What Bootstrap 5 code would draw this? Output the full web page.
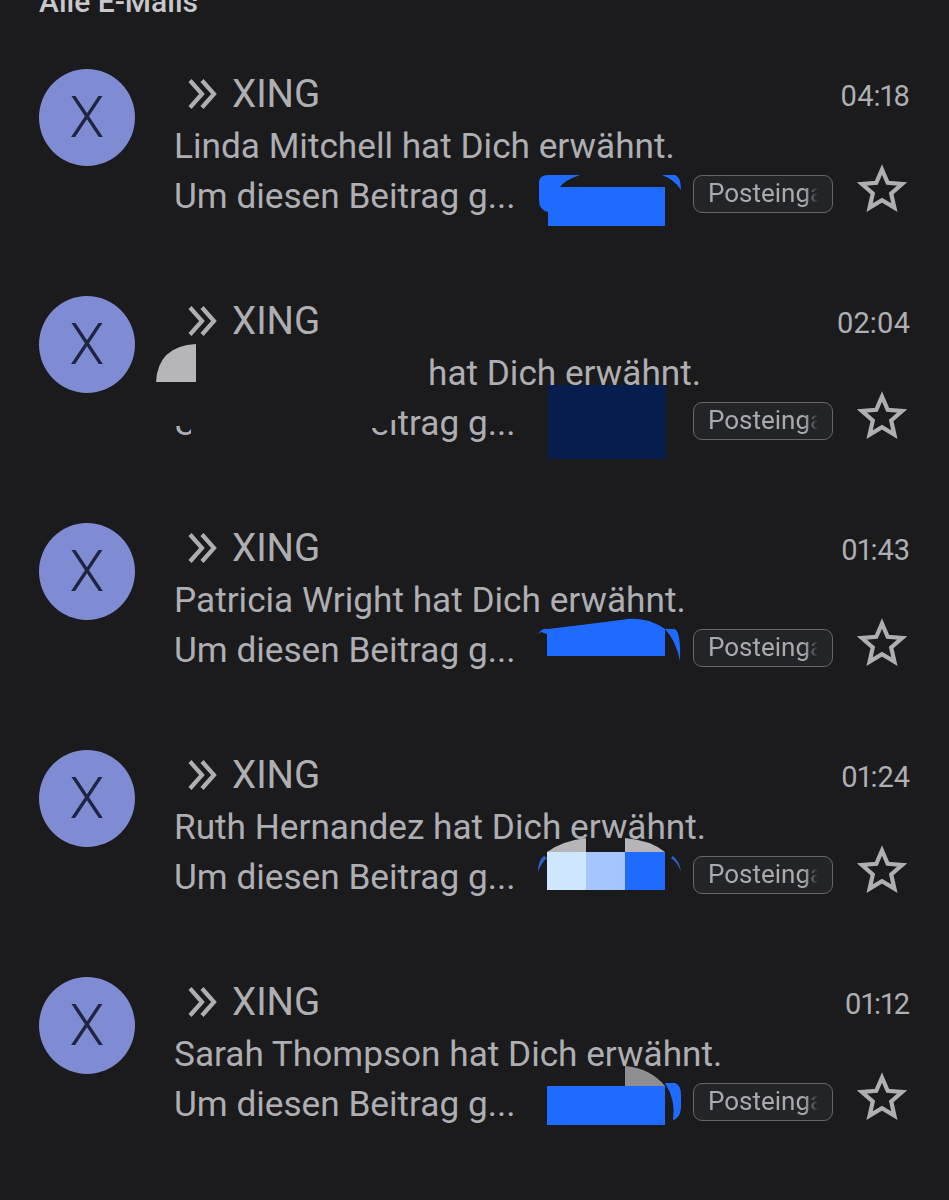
<!DOCTYPE html>
<html lang="de">
<head>
  <meta charset="UTF-8" />
  <meta name="viewport" content="width=device-width, initial-scale=1.0"/>
  <title>Alle E-Mails</title>
  <link href="https://cdn.jsdelivr.net/npm/bootstrap@5.3.0/dist/css/bootstrap.min.css" rel="stylesheet">
  <style>
    body {
      background: #1b1b1d;
      color: #aeaeb3;
      font-family: Roboto, "Noto Sans", sans-serif;
      height: 1200px;
      overflow: hidden;
    }
    .inbox-title {
      height: 57px;
      margin: 0;
      padding-left: 39px;
      font-size: 30px;
      font-weight: 500;
      line-height: 30px;
      color: #c8c8cc;
      transform: translateY(-13px);
    }
    .mail-row {
      height: 227px;
      padding: 12px 39px 0;
    }
    .sender-avatar {
      width: 96px;
      height: 97px;
      background: #7f8bd3;
      color: #1f2540;
      font-size: 57px;
      font-weight: 300;
    }
    .mail-body { margin-left: 39px; }
    .sender-line { height: 49px; margin-bottom: 3px; font-size: 38.5px; line-height: 43px; }
    .chevrons { width: 30px; height: 32px; margin: 0 14px 0 14px; }
    .mail-time { font-size: 29px; line-height: 34px; margin-top: 10px; font-variant-numeric: proportional-nums; }
    .subject-line { font-size: 35.2px; line-height: 50px; height: 50px; white-space: nowrap; }
    .name-slot { display: inline-block; width: 254px; }
    .snippet-line { font-size: 35.2px; line-height: 50px; height: 50px; white-space: nowrap; }
    .snippet-text { width: 519px; }
    .label-chip {
      width: 140px;
      height: 38px;
      margin-top: 4px;
      padding-left: 14px;
      background: #232428;
      border: 1px solid #66666a;
      border-radius: 9px;
      font-size: 26px;
      line-height: 34px;
      overflow: hidden;
      color: #a9a9ae;
    }
    .label-chip span {
      display: block;
      width: 110px;
      overflow: hidden;
      -webkit-mask-image: linear-gradient(to right, #000 88%, transparent);
      mask-image: linear-gradient(to right, #000 88%, transparent);
    }
    .star-icon { width: 50px; height: 50px; margin-left: 24px; margin-top: -7px; }
    .row-cover { inset: 0; width: 949px; height: 227px; pointer-events: none; }
  </style>
</head>
<body>
  <h6 class="inbox-title">Alle E-Mails</h6>

  <div class="mail-row d-flex position-relative">
    <div class="sender-avatar rounded-circle d-flex align-items-center justify-content-center flex-shrink-0">X</div>
    <div class="mail-body flex-grow-1">
      <div class="sender-line d-flex justify-content-between">
        <div class="d-flex align-items-center">
          <svg class="chevrons" viewBox="0 0 30 32" fill="none" stroke="#aeaeb3" stroke-width="4.2"><path d="M2 2.5 14 16 2 29.5M14 2.5 26 16 14 29.5"/></svg>XING
        </div>
        <div class="mail-time">04:18</div>
      </div>
      <div class="subject-line">Linda Mitchell hat Dich erwähnt.</div>
      <div class="snippet-line d-flex">
        <div class="snippet-text">Um diesen Beitrag g...</div>
        <div class="label-chip flex-shrink-0"><span>Posteingang</span></div>
        <svg class="star-icon flex-shrink-0" viewBox="0 0 50 50" fill="none" stroke="#aeaeb3" stroke-width="4.2"><path d="M25 5.5 30.7 18.8 45 20 34.2 29.5 37.4 43.6 25 36.2 12.6 43.6 15.8 29.5 5 20 19.3 18.8Z"/></svg>
      </div>
    </div>
    <svg class="row-cover position-absolute" viewBox="0 0 949 227">
      <path fill="#1f6bff" d="M539 126Q539 118 548 118L580 118Q565 123 560 130L665 130 665 169 548 169 548 155Q539 153 539 143ZM662 118 675 118Q681 120 681 133 675 123 662 118Z"/>
    </svg>
  </div>

  <div class="mail-row d-flex position-relative">
    <div class="sender-avatar rounded-circle d-flex align-items-center justify-content-center flex-shrink-0">X</div>
    <div class="mail-body flex-grow-1">
      <div class="sender-line d-flex justify-content-between">
        <div class="d-flex align-items-center">
          <svg class="chevrons" viewBox="0 0 30 32" fill="none" stroke="#aeaeb3" stroke-width="4.2"><path d="M2 2.5 14 16 2 29.5M14 2.5 26 16 14 29.5"/></svg>XING
        </div>
        <div class="mail-time">02:04</div>
      </div>
      <div class="subject-line"><span class="name-slot"></span>hat Dich erwähnt.</div>
      <div class="snippet-line d-flex">
        <div class="snippet-text">Um diesen Beitrag g...</div>
        <div class="label-chip flex-shrink-0"><span>Posteingang</span></div>
        <svg class="star-icon flex-shrink-0" viewBox="0 0 50 50" fill="none" stroke="#aeaeb3" stroke-width="4.2"><path d="M25 5.5 30.7 18.8 45 20 34.2 29.5 37.4 43.6 25 36.2 12.6 43.6 15.8 29.5 5 20 19.3 18.8Z"/></svg>
      </div>
    </div>
    <svg class="row-cover position-absolute" viewBox="0 0 949 227">
      <path fill="#1b1b1d" d="M160 118H398V136H388V144H372V162H191V142H160Z"/>
      <path fill="#b5b5ba" d="M156 98Q158 62 196 60V98Z"/>
      <rect x="548" y="101" width="118" height="74" fill="#061d4d"/>
    </svg>
  </div>

  <div class="mail-row d-flex position-relative">
    <div class="sender-avatar rounded-circle d-flex align-items-center justify-content-center flex-shrink-0">X</div>
    <div class="mail-body flex-grow-1">
      <div class="sender-line d-flex justify-content-between">
        <div class="d-flex align-items-center">
          <svg class="chevrons" viewBox="0 0 30 32" fill="none" stroke="#aeaeb3" stroke-width="4.2"><path d="M2 2.5 14 16 2 29.5M14 2.5 26 16 14 29.5"/></svg>XING
        </div>
        <div class="mail-time">01:43</div>
      </div>
      <div class="subject-line">Patricia Wright hat Dich erwähnt.</div>
      <div class="snippet-line d-flex">
        <div class="snippet-text">Um diesen Beitrag g...</div>
        <div class="label-chip flex-shrink-0"><span>Posteingang</span></div>
        <svg class="star-icon flex-shrink-0" viewBox="0 0 50 50" fill="none" stroke="#aeaeb3" stroke-width="4.2"><path d="M25 5.5 30.7 18.8 45 20 34.2 29.5 37.4 43.6 25 36.2 12.6 43.6 15.8 29.5 5 20 19.3 18.8Z"/></svg>
      </div>
    </div>
    <svg class="row-cover position-absolute" viewBox="0 0 949 227">
      <path fill="#1f6bff" d="M538 123Q542 117 548 118 590 113 628 108 648 106 665 118L675 118Q681 122 680 150 676 130 665 118V145H547V123L541 121Z"/>
    </svg>
  </div>

  <div class="mail-row d-flex position-relative">
    <div class="sender-avatar rounded-circle d-flex align-items-center justify-content-center flex-shrink-0">X</div>
    <div class="mail-body flex-grow-1">
      <div class="sender-line d-flex justify-content-between">
        <div class="d-flex align-items-center">
          <svg class="chevrons" viewBox="0 0 30 32" fill="none" stroke="#aeaeb3" stroke-width="4.2"><path d="M2 2.5 14 16 2 29.5M14 2.5 26 16 14 29.5"/></svg>XING
        </div>
        <div class="mail-time">01:24</div>
      </div>
      <div class="subject-line">Ruth Hernandez hat Dich erwähnt.</div>
      <div class="snippet-line d-flex">
        <div class="snippet-text">Um diesen Beitrag g...</div>
        <div class="label-chip flex-shrink-0"><span>Posteingang</span></div>
        <svg class="star-icon flex-shrink-0" viewBox="0 0 50 50" fill="none" stroke="#aeaeb3" stroke-width="4.2"><path d="M25 5.5 30.7 18.8 45 20 34.2 29.5 37.4 43.6 25 36.2 12.6 43.6 15.8 29.5 5 20 19.3 18.8Z"/></svg>
      </div>
    </div>
    <svg class="row-cover position-absolute" viewBox="0 0 949 227">
      <path fill="#1b1b1d" d="M586 100H625V114H586Z"/>
      <path fill="#b5b5ba" d="M547 114Q562 103 586 100V114ZM625 100Q650 102 665 114H625Z"/>
      <rect x="547" y="114" width="39" height="38" fill="#cfe6ff"/>
      <rect x="586" y="114" width="39" height="38" fill="#a6c4ff"/>
      <rect x="625" y="114" width="40" height="38" fill="#1f6bff"/>
      <path fill="#2a62c9" d="M538 134Q538 122 544 118L547 120Q541 125 538 134ZM681 134Q680 124 673 118L671 120Q678 125 681 134Z"/>
    </svg>
  </div>

  <div class="mail-row d-flex position-relative">
    <div class="sender-avatar rounded-circle d-flex align-items-center justify-content-center flex-shrink-0">X</div>
    <div class="mail-body flex-grow-1">
      <div class="sender-line d-flex justify-content-between">
        <div class="d-flex align-items-center">
          <svg class="chevrons" viewBox="0 0 30 32" fill="none" stroke="#aeaeb3" stroke-width="4.2"><path d="M2 2.5 14 16 2 29.5M14 2.5 26 16 14 29.5"/></svg>XING
        </div>
        <div class="mail-time">01:12</div>
      </div>
      <div class="subject-line">Sarah Thompson hat Dich erwähnt.</div>
      <div class="snippet-line d-flex">
        <div class="snippet-text">Um diesen Beitrag g...</div>
        <div class="label-chip flex-shrink-0"><span>Posteingang</span></div>
        <svg class="star-icon flex-shrink-0" viewBox="0 0 50 50" fill="none" stroke="#aeaeb3" stroke-width="4.2"><path d="M25 5.5 30.7 18.8 45 20 34.2 29.5 37.4 43.6 25 36.2 12.6 43.6 15.8 29.5 5 20 19.3 18.8Z"/></svg>
      </div>
    </div>
    <svg class="row-cover position-absolute" viewBox="0 0 949 227">
      <path fill="#8e8e93" d="M625 101Q650 103 665 121H625Z"/>
      <rect x="547" y="121" width="118" height="39" fill="#1f6bff"/>
      <path fill="#1f6bff" d="M665 118H675Q681 120 681 130V143Q680 153 673 155 676 135 665 118Z"/>
    </svg>
  </div>

  <script src="https://cdn.jsdelivr.net/npm/bootstrap@5.3.0/dist/js/bootstrap.bundle.min.js"></script>
</body>
</html>
